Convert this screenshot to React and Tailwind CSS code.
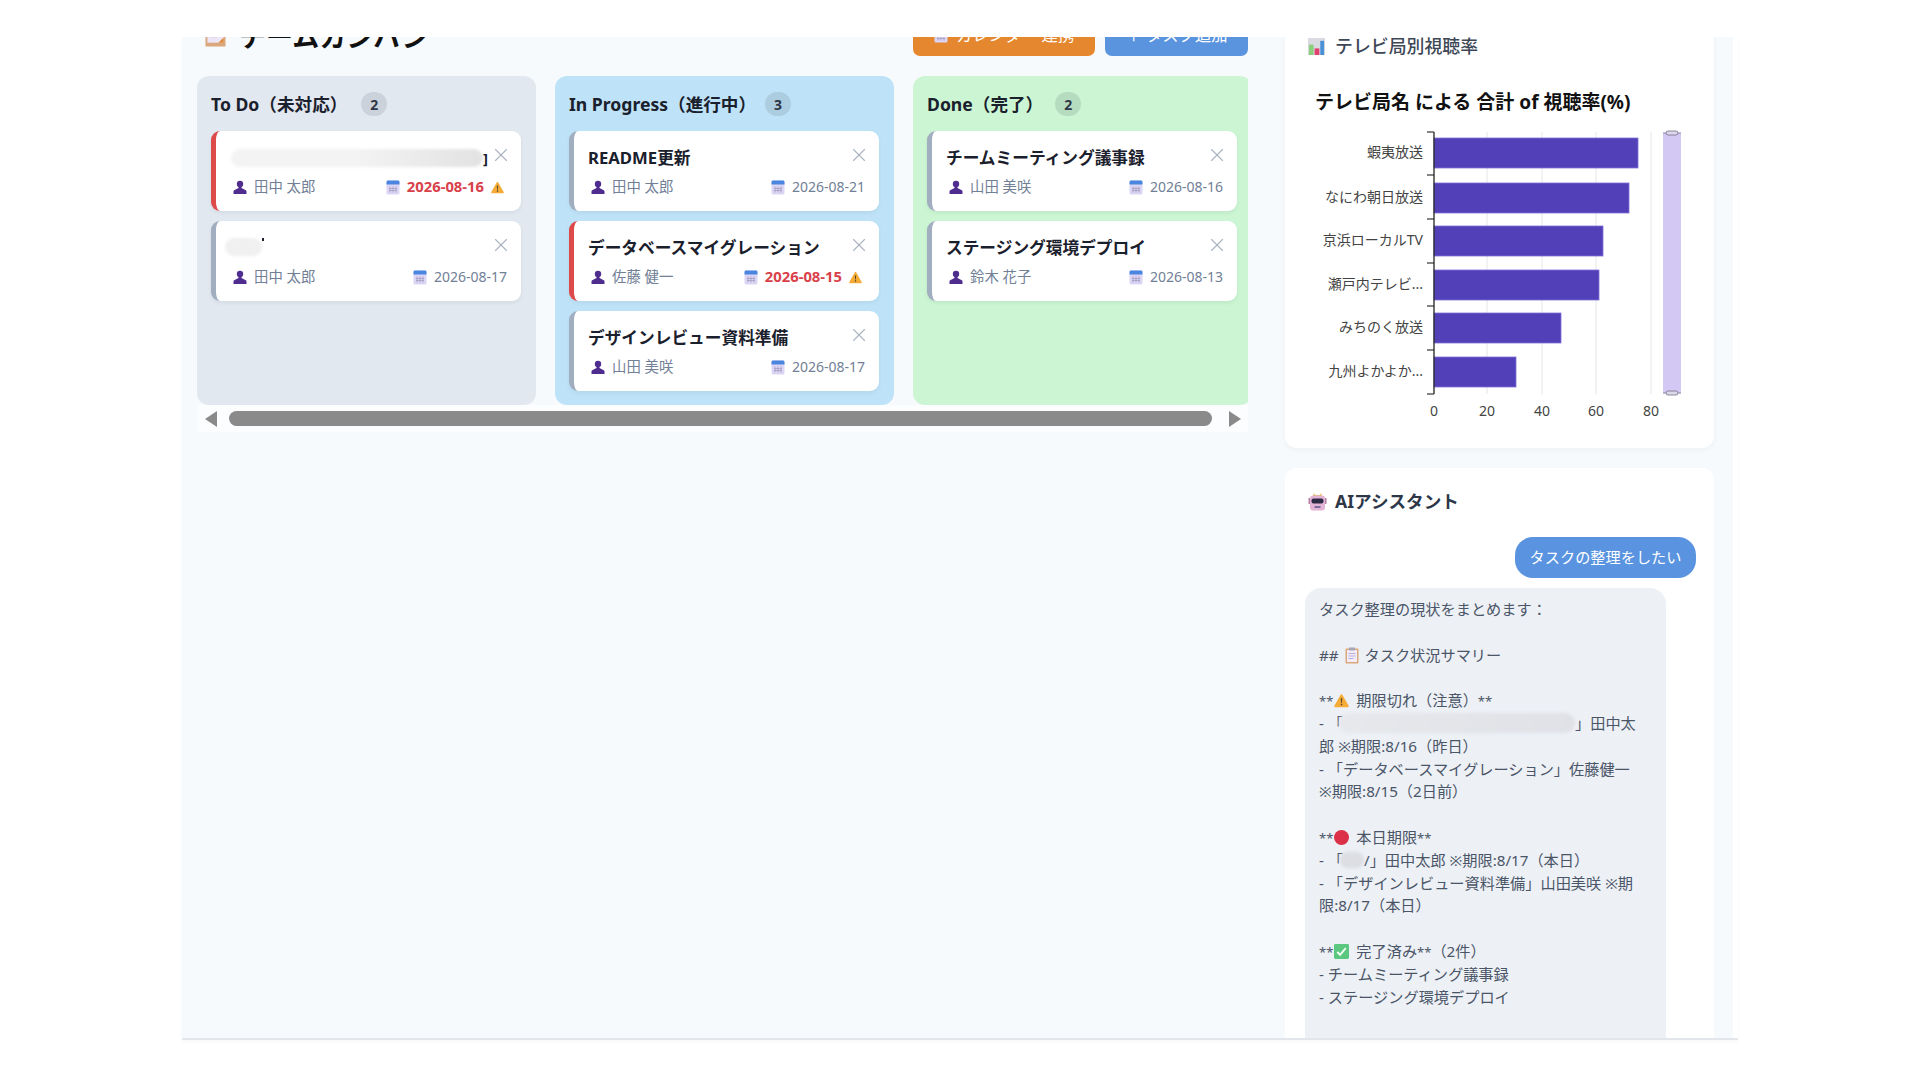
import { X } from 'lucide-react';

const columns = [
  {
    title: 'To Do（未対応）', count: 2, bg: 'bg-[#e2e8f0]', badge: 'bg-[#cbd2db]', gap: 'gap-[14px]',
    cards: [
      { smudge: 'long', user: '田中 太郎', date: '2026-08-16', overdue: true },
      { smudge: 'short', user: '田中 太郎', date: '2026-08-17' },
    ],
  },
  {
    title: 'In Progress（進行中）', count: 3, bg: 'bg-[#bee3f8]', badge: 'bg-[#acccdf]', gap: 'gap-[9px]',
    cards: [
      { title: 'README更新', user: '田中 太郎', date: '2026-08-21' },
      { title: 'データベースマイグレーション', user: '佐藤 健一', date: '2026-08-15', overdue: true },
      { title: 'デザインレビュー資料準備', user: '山田 美咲', date: '2026-08-17' },
    ],
  },
  {
    title: 'Done（完了）', count: 2, bg: 'bg-[#cbf5d3]', badge: 'bg-[#b6dcbf]', gap: 'gap-[12px]',
    cards: [
      { title: 'チームミーティング議事録', user: '山田 美咲', date: '2026-08-16' },
      { title: 'ステージング環境デプロイ', user: '鈴木 花子', date: '2026-08-13' },
    ],
  },
];

const bars = [
  { label: '蝦夷放送', end: 338, y: 68 },
  { label: 'なにわ朝日放送', end: 329, y: 113 },
  { label: '京浜ローカルTV', end: 303, y: 156 },
  { label: '瀬戸内テレビ...', end: 299, y: 200 },
  { label: 'みちのく放送', end: 261, y: 243 },
  { label: '九州よかよか...', end: 216, y: 287 },
];

const rowTicks = [62, 105, 149, 193, 236, 280, 324];
const grid = [
  { x: 134, label: '0' },
  { x: 187, label: '20' },
  { x: 242, label: '40' },
  { x: 296, label: '60' },
  { x: 351, label: '80' },
];

function UserIcon() {
  return (
    <svg viewBox="0 0 14 14" className="w-[14px] h-[14px] shrink-0">
      <circle cx="7" cy="4" r="3.2" fill="#4f2d8f" />
      <path d="M5.5 6.5h3v1.6l4.3 2.1c.5.3.7.7.7 1.2V14H.5v-2.6c0-.5.2-.9.7-1.2l4.3-2.1z" fill="#4f2d8f" />
    </svg>
  );
}

function CalendarIcon() {
  return (
    <svg viewBox="0 0 14 15" className="w-[14px] h-[15px] shrink-0">
      <rect x="0.5" y="0.5" width="13" height="14" rx="1.5" fill="#dcd5f5" />
      <path d="M.5 2C.5 1.2 1.2.5 2 .5h10c.8 0 1.5.7 1.5 1.5v2.5H.5z" fill="#4a86e0" />
      <path d="M4 6.5v6M7 6.5v6M10 6.5v6M3 8.5h8M3 10.5h8" stroke="#a49fc0" strokeWidth="0.8" />
    </svg>
  );
}

function WarnIcon({ size = 13 }) {
  return (
    <svg viewBox="0 0 16 15" style={{ width: size, height: size }} className="shrink-0">
      <path d="M8 .8c.4 0 .7.2.9.5l6.7 11.8c.4.7-.1 1.6-.9 1.6H1.300c-.8 0-1.300-.9-.9-1.600L7.100 1.300c.2-.3.5-.5.9-.5z" fill="#f5ab35" />
      <path d="M7.200 5h1.600l-.3 5h-1zM7.200 11h1.600v1.600H7.200z" fill="#5b4a2a" />
    </svg>
  );
}

function MemoIcon() {
  return (
    <svg viewBox="0 0 22 22" className="w-[21px] h-[21px] shrink-0">
      <rect x="0.5" y="0.5" width="21" height="21" fill="#dba77c" />
      <rect x="2.500" y="0.5" width="17" height="17" fill="#ece6f6" />
      <path d="M5 4h12M5 7.500h12M5 11h8" stroke="#b9aee0" strokeWidth="1.400" />
      <path d="M14 17.500l5.500-5.500v5.500z" fill="#e08a3a" />
    </svg>
  );
}

function BarChartIcon() {
  return (
    <svg viewBox="0 0 18 18" className="w-[17px] h-[17px] shrink-0">
      <rect width="18" height="18" fill="#d9dae2" />
      <rect x="1" y="7" width="5" height="11" fill="#8ccf7e" />
      <rect x="7" y="11" width="5" height="7" fill="#e2416f" />
      <rect x="13" y="3" width="4" height="15" fill="#4a90d9" />
    </svg>
  );
}

function RobotIcon() {
  return (
    <svg viewBox="0 0 19 19" className="w-[19px] h-[19px] shrink-0">
      <path d="M6 1l1 2h5l1-2 1 3H5z" fill="#e7b94b" />
      <rect x="0.5" y="6" width="2" height="6" fill="#b27fa8" />
      <rect x="16.500" y="6" width="2" height="6" fill="#b27fa8" />
      <rect x="2" y="3.500" width="15" height="15" rx="3" fill="#e3b4d6" />
      <rect x="3.500" y="6.500" width="12" height="5" rx="2" fill="#2d2a45" />
      <rect x="6.500" y="14" width="6" height="2" fill="#7b6a9c" />
    </svg>
  );
}

function ClipboardIcon() {
  return (
    <svg viewBox="0 0 14 17" className="w-[14px] h-[17px] inline-block align-[-3px]">
      <rect x="0.5" y="1.500" width="13" height="15" rx="1" fill="#dba77c" />
      <rect x="2" y="3" width="10" height="12" fill="#f1ecf6" />
      <rect x="4" y="0.5" width="6" height="3" fill="#a9a5b8" />
      <path d="M3.500 6.500h7M3.500 9h7M3.500 11.500h5" stroke="#b9aee0" />
    </svg>
  );
}

function Stars() {
  return <span className="text-[13px]">**</span>;
}

function RedDot() {
  return <span className="inline-block w-[15px] h-[15px] rounded-full bg-[#dc2f48] align-[-2px] ml-[1px] mr-[7px]" />;
}

function GreenCheck() {
  return (
    <svg viewBox="0 0 16 16" className="w-[15px] h-[15px] inline-block align-[-2px] ml-[1px] mr-[7px]">
      <rect width="16" height="16" rx="1.500" fill="#5cc77f" />
      <path d="M3.500 8.500l3 3 6-7" fill="none" stroke="#f5fff5" strokeWidth="2" />
    </svg>
  );
}

function Smudge({ className }) {
  return <div className={`rounded-full blur-[1.5px] ${className}`} />;
}

function TaskCard({ card }) {
  return (
    <div className={`h-[80px] rounded-[9px] bg-white border-l-[5px] pl-[14px] pr-[14px] pt-[15px] shadow-[0_2px_4px_rgba(0,0,0,0.06)] ${card.overdue ? 'border-[#dd4a4a]' : 'border-[#a0aec0]'}`}>
      <div className="flex justify-between h-[24px] mb-[7px]">
        {card.title && <span className="text-[16.7px] leading-[24px] font-bold text-[#1a202c] whitespace-nowrap">{card.title}</span>}
        {card.smudge === 'long' && (
          <div className="flex items-center ml-[1px]">
            <Smudge className="w-[252px] h-[18px] bg-gradient-to-r from-[#f3f3f3] via-[#f3f3f3] to-[#e2e2e2]" />
            <span className="text-[15px] leading-[20px] font-bold text-[#1a202c]">]</span>
          </div>
        )}
        {card.smudge === 'short' && (
          <div className="flex items-start -ml-[5px] pt-[2px]">
            <Smudge className="w-[37px] h-[18px] bg-[#f0f0f0]" />
            <span className="w-[2px] h-[3px] bg-[#1a202c]" />
          </div>
        )}
        <X className="w-[22px] h-[22px] text-[#a9b3c1] shrink-0 -mt-[2px] -mr-[5px]" strokeWidth={1.200} />
      </div>
      <div className="flex items-center justify-between h-[20px]">
        <div className="flex items-center gap-[7px] pl-[3px] text-[14.4px] text-[#718096]">
          <UserIcon />
          <span>{card.user}</span>
        </div>
        <div className="flex items-center">
          <CalendarIcon />
          <span className={`ml-[7px] pb-[2px] whitespace-nowrap ${card.overdue ? 'text-[14.8px] font-bold text-[#d9414a]' : 'text-[14px] text-[#718096]'}`}>{card.date}</span>
          {card.overdue && <span className="ml-[7px] mr-[3px] flex"><WarnIcon /></span>}
        </div>
      </div>
    </div>
  );
}

function KanbanColumn({ column }) {
  return (
    <div className={`w-[339px] h-[329px] shrink-0 rounded-[12px] pt-[16px] pl-[14px] pr-[15px] ${column.bg}`}>
      <div className={`flex items-center h-[24px] mb-[15px] ${column.gap}`}>
        <h3 className="text-[17.6px] font-bold text-[#1a202c] whitespace-nowrap">{column.title}</h3>
        <span className={`w-[26px] h-[24px] rounded-full flex items-center justify-center text-[14px] font-bold text-[#2d3748] ${column.badge}`}>{column.count}</span>
      </div>
      <div className="flex flex-col gap-[10px]">
        {column.cards.map((card, i) => <TaskCard key={i} card={card} />)}
      </div>
    </div>
  );
}

function ChartSvg() {
  return (
    <svg viewBox="0 0 399 360" className="w-[399px] h-[360px] mt-[10px]" fontFamily="'Noto Sans','Noto Sans CJK JP',sans-serif">
      <text x="15" y="39" fontSize="19" fontWeight="700" fill="#111">テレビ局名 による 合計 of 視聴率(%)</text>
      {grid.slice(1).map((g) => <line key={g.x} x1={g.x} x2={g.x} y1="62" y2="324" stroke="#e6e6e6" />)}
      {bars.map((b) => (
        <g key={b.label}>
          <rect x="134" y={b.y} width={b.end - 134} height="30" fill="#5240b8" stroke="#8172d6" strokeWidth="0.8" />
          <text x="123" y={b.y + 19} fontSize="14" textAnchor="end" fill="#444">{b.label}</text>
        </g>
      ))}
      <line x1="134" x2="134" y1="62" y2="324" stroke="#222" strokeWidth="1.300" />
      {rowTicks.map((y) => <line key={y} x1="127" x2="134" y1={y} y2={y} stroke="#222" strokeWidth="1.100" />)}
      {grid.map((g) => <text key={g.x} x={g.x} y="346" fontSize="14" textAnchor="middle" fill="#444">{g.label}</text>)}
      <rect x="363" y="63" width="18" height="260" fill="#d3c8f4" />
      <line x1="363" x2="381" y1="63" y2="63" stroke="#8f86a8" />
      <line x1="363" x2="381" y1="323" y2="323" stroke="#8f86a8" />
      <rect x="366" y="61" width="12" height="4" rx="2" fill="#dcd8e8" stroke="#77708f" strokeWidth="0.8" />
      <rect x="366" y="321" width="12" height="4" rx="2" fill="#dcd8e8" stroke="#77708f" strokeWidth="0.8" />
    </svg>
  );
}

function AiMessage() {
  return (
    <div className="w-[361px] h-[520px] rounded-t-[16px] bg-[#edf0f5] pl-[14px] pt-[10px] text-[15.2px] leading-[22.8px] text-[#4a5568] whitespace-nowrap [&>div]:h-[22.8px]">
      <div>タスク整理の現状をまとめます：</div>
      <div>&nbsp;</div>
      <div>## <span className="mx-[2px]"><ClipboardIcon /></span> タスク状況サマリー</div>
      <div>&nbsp;</div>
      <div><Stars /><span className="inline-block ml-[1px] mr-[7px] align-[-2px]"><WarnIcon size={15} /></span>期限切れ（注意）<Stars /></div>
      <div className="flex items-center">
        <span>- 「</span>
        <Smudge className="w-[236px] h-[20px] -ml-[4px] bg-gradient-to-r from-[#e6e8ec] to-[#dfe1e6]" />
        <span>」田中太</span>
      </div>
      <div>郎 ※期限:8/16（昨日）</div>
      <div>- 「データベースマイグレーション」佐藤健一</div>
      <div>※期限:8/15（2日前）</div>
      <div>&nbsp;</div>
      <div><Stars /><RedDot />本日期限<Stars /></div>
      <div className="flex items-center">
        <span>- 「</span>
        <Smudge className="w-[24px] h-[16px] -ml-[3px] bg-[#dcdee3]" />
        <span>/」田中太郎 ※期限:8/17（本日）</span>
      </div>
      <div>- 「デザインレビュー資料準備」山田美咲 ※期</div>
      <div>限:8/17（本日）</div>
      <div>&nbsp;</div>
      <div><Stars /><GreenCheck />完了済み<Stars />（2件）</div>
      <div>- チームミーティング議事録</div>
      <div>- ステージング環境デプロイ</div>
    </div>
  );
}

export default function App() {
  return (
    <div className="h-screen overflow-hidden bg-white pt-[37px] font-['Noto_Sans','Noto_Sans_CJK_JP',sans-serif]">
      <div className="mx-auto w-[1556px] h-[1003px] overflow-hidden border-b-2 border-[#e3e6ea] shadow-[0_2px_3px_rgba(0,0,0,0.03)]">
        <div className="w-[1551px] h-full bg-[#f7fafc] flex items-start pl-[15px]">

          {/* Kanban */}
          <div className="w-[1051px] shrink-0 -mt-[21px]">
            <div className="flex items-center justify-between h-[40px] mb-[20px]">
              <div className="flex items-center gap-[13px] pl-[8px]">
                <MemoIcon />
                <h2 className="text-[27px] font-bold text-[#111] whitespace-nowrap translate-y-[1px]">チームカンバン</h2>
              </div>
              <div className="flex gap-[10px]">
                <button className="w-[182px] h-[40px] pb-[2px] rounded-[7px] bg-[#e5872f] text-white text-[16.3px] flex items-center justify-center gap-[8px]">
                  <CalendarIcon />カレンダー 連携
                </button>
                <button className="w-[143px] h-[40px] pb-[2px] rounded-[7px] bg-[#5a94de] text-white text-[16.3px] flex items-center justify-center">
                  ＋ タスク追加
                </button>
              </div>
            </div>
            <div className="flex gap-[19px] overflow-hidden">
              {columns.map((c) => <KanbanColumn key={c.title} column={c} />)}
            </div>
            <div className="h-[27px] bg-[#fcfdfe] flex items-center pl-[8px] pr-[7px]">
              <svg viewBox="0 0 12 16" className="w-[12px] h-[16px] shrink-0"><path d="M12 0v16L0 8z" fill="#8a8a8a" /></svg>
              <div className="flex-1 h-[15px] rounded-full bg-[#8a8a8a] ml-[12px] mr-[17px]" />
              <svg viewBox="0 0 12 16" className="w-[12px] h-[16px] shrink-0"><path d="M0 0v16l12-8z" fill="#8a8a8a" /></svg>
            </div>
          </div>

          {/* Side panel */}
          <div className="w-[429px] shrink-0 ml-[37px] -mt-[24px] flex flex-col gap-[20px]">
            <div className="bg-white rounded-[12px] h-[435px] pt-[20px] px-[15px] shadow-[0_2px_6px_rgba(0,0,0,0.04)]">
              <div className="flex items-center gap-[10px] pl-[8px] h-[27px]">
                <BarChartIcon />
                <h3 className="text-[17.9px] font-medium text-[#3d4756] whitespace-nowrap">テレビ局別視聴率</h3>
              </div>
              <ChartSvg />
            </div>
            <div className="bg-white rounded-t-[12px] h-[640px] pt-[20px] pl-[20px] pr-[18px]">
              <div className="flex items-center gap-[8px] pl-[3px] h-[27px] mb-[22px]">
                <RobotIcon />
                <h3 className="text-[17.6px] font-bold text-[#2d3748] whitespace-nowrap">AIアシスタント</h3>
              </div>
              <div className="flex justify-end mb-[10px]">
                <div className="w-[181px] h-[41px] rounded-[18px] bg-[#5a94e0] text-white text-[15.2px] flex items-center justify-center whitespace-nowrap">タスクの整理をしたい</div>
              </div>
              <AiMessage />
            </div>
          </div>

        </div>
      </div>
    </div>
  );
}
